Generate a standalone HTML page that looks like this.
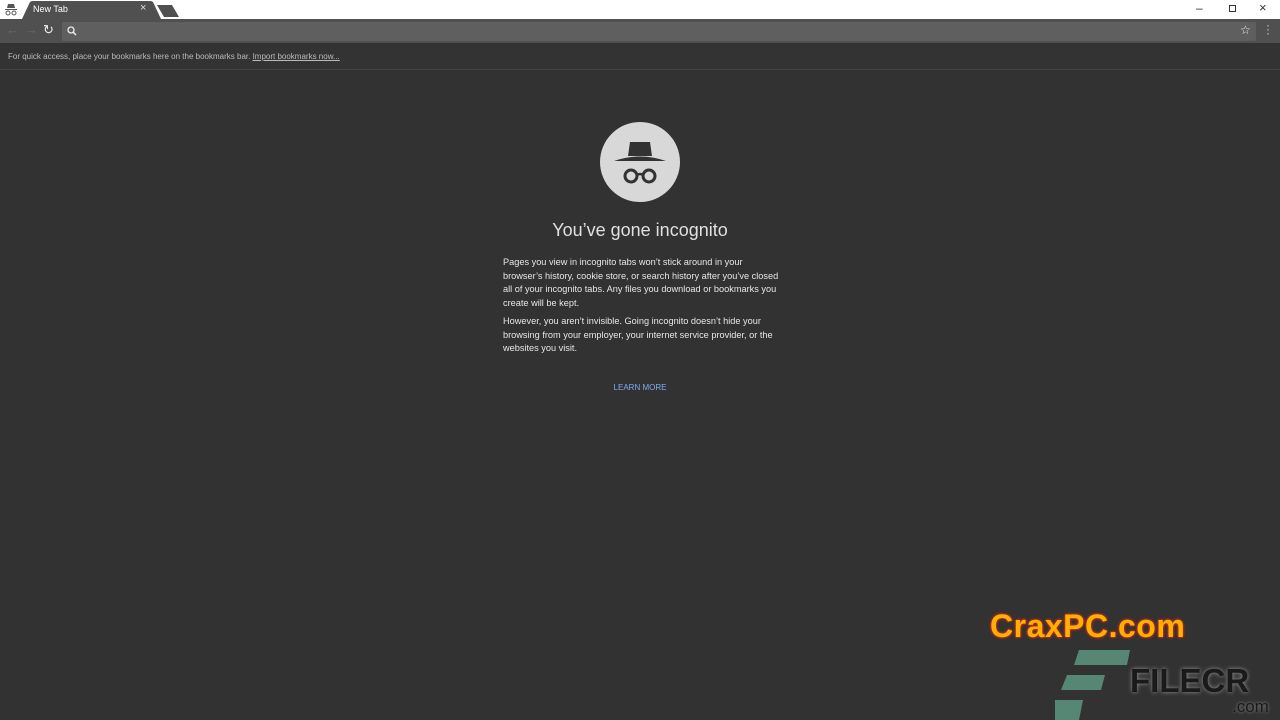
<!DOCTYPE html>
<html><head><meta charset="utf-8"><style>
*{margin:0;padding:0;box-sizing:border-box}
body{width:1280px;height:720px;background:#323232;font-family:"Liberation Sans",Arial,sans-serif;position:relative;overflow:hidden}
.abs{position:absolute}
</style></head><body>
<div class="abs" style="left:0;top:0;width:1280px;height:19px;background:#fff"></div>
<svg class="abs" style="left:4px;top:4px" width="14" height="12" viewBox="0 0 14 12"><path d="M4 0h6l1 4H3z M1 5h12v1H1z" fill="#555"/><circle cx="4" cy="9" r="2" fill="none" stroke="#555" stroke-width="1"/><circle cx="10" cy="9" r="2" fill="none" stroke="#555" stroke-width="1"/></svg>
<svg class="abs" style="left:22px;top:1px" width="165" height="18"><path d="M0 18 L8 1 Q9 0 11 0 H128 Q130 0 131 1 L139 18Z" fill="#505050"/><path d="M135 4 H150 L157 16 H142Z" fill="#505050"/></svg>
<div class="abs" style="left:33px;top:4px;font-size:9px;color:#fff">New Tab</div>
<div class="abs" style="left:140px;top:2px;font-size:11px;color:#ddd">×</div>
<div class="abs" style="left:1196px;top:1px;font-size:12px;color:#333">–</div>
<div class="abs" style="left:1229px;top:5px;width:7px;height:7px;border:1px solid #333"></div>
<div class="abs" style="left:1259px;top:0px;font-size:13px;color:#333">×</div>
<div class="abs" style="left:0;top:19px;width:1280px;height:24px;background:#505050"></div>
<div class="abs" style="left:6px;top:22px;font-size:13px;color:#6a6a6a">←</div>
<div class="abs" style="left:25px;top:22px;font-size:13px;color:#6a6a6a">→</div>
<div class="abs" style="left:43px;top:22px;font-size:13px;color:#eee">↻</div>
<div class="abs" style="left:62px;top:22px;width:1194px;height:19px;background:#5f5f5f;border-radius:2px"></div>
<svg class="abs" style="left:67px;top:26px" width="10" height="10"><circle cx="4" cy="4" r="3" fill="none" stroke="#eee" stroke-width="1.3"/><path d="M6 6l3 3" stroke="#eee" stroke-width="1.5"/></svg>
<div class="abs" style="left:1240px;top:23px;font-size:12px;color:#eee">☆</div>
<div class="abs" style="left:1266px;top:23px;font-size:12px;color:#ccc;line-height:4px;width:3px">·<br>·<br>·</div>
<div class="abs" style="left:0;top:43px;width:1280px;height:27px;background:#333;border-bottom:1px solid #444"></div>
<div class="abs" style="left:8px;top:52px;font-size:8px;color:#bbb">For quick access, place your bookmarks here on the bookmarks bar. <span style="text-decoration:underline">Import bookmarks now...</span></div>
<svg class="abs" style="left:600px;top:122px" width="80" height="80" viewBox="0 0 80 80"><circle cx="40" cy="40" r="40" fill="#d8d8d8"/><path d="M30 20 H50 L52 34 H28Z" fill="#333"/><path d="M14 39 Q40 30 66 39 Z" fill="#333"/><circle cx="31" cy="54" r="6" fill="none" stroke="#333" stroke-width="3"/><circle cx="49" cy="54" r="6" fill="none" stroke="#333" stroke-width="3"/><path d="M37 53 Q40 51 43 53" fill="none" stroke="#333" stroke-width="2.5"/></svg>
<div class="abs" style="left:0;width:1280px;top:220px;text-align:center;font-size:18px;color:#e0e0e0">You’ve gone incognito</div>
<div class="abs" style="left:503px;top:256px;width:278px;font-size:9.2px;line-height:13.5px;color:#e6e6e6">
<p>Pages you view in incognito tabs won’t stick around in your<br>browser’s history, cookie store, or search history after you’ve closed<br>all of your incognito tabs. Any files you download or bookmarks you<br>create will be kept.</p>
<p style="margin-top:5px">However, you aren’t invisible. Going incognito doesn’t hide your<br>browsing from your employer, your internet service provider, or the<br>websites you visit.</p></div>
<div class="abs" style="left:0;width:1280px;top:383px;text-align:center;font-size:8px;color:#7cacf8">LEARN MORE</div>
<div class="abs" style="left:990px;top:608px;font-size:32px;font-weight:bold;letter-spacing:0.5px;color:#ffb000;text-shadow:0 0 3px #d22,0 0 2px #f40">CraxPC.com</div>
<svg class="abs" style="left:1055px;top:650px" width="80" height="70"><path d="M24 0 H75 L72 15 H19Z M12 25 H50 L46 40 H6Z M0 50 H28 L24 70 H-4Z" fill="#568774"/></svg>
<div class="abs" style="left:1130px;top:662px;font-size:33px;font-weight:bold;color:#1a1a1a;text-shadow:0 0 4px #999">FILECR</div>
<div class="abs" style="left:1232px;top:697px;font-size:17px;color:#1a1a1a;text-shadow:0 0 3px #999">.com</div>
</body></html>
